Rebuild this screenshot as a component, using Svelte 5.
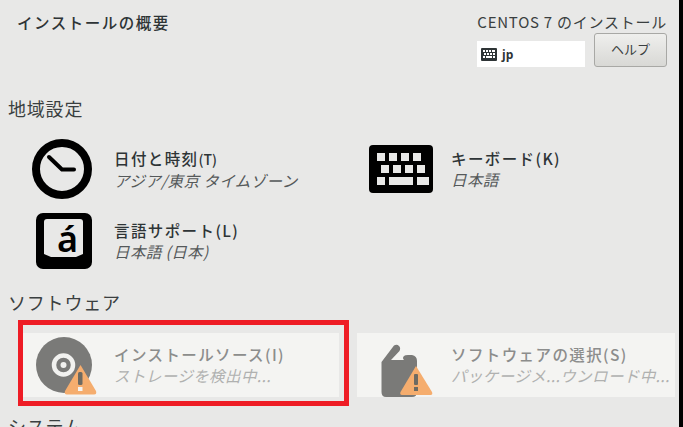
<script>
  const warn = "M80.5 365 L96 391 Q97 394.5 94 394.5 L67 394.5 Q64 394.5 65 391 Z";
</script>

<div class="screen">
  <main class="page">
    <header class="top">
      <h1>インストールの概要</h1>
      <div class="top-right">
        <div class="product">CENTOS 7 のインストール</div>
        <div class="controls">
          <div class="layout">
            <svg width="16" height="13" viewBox="0 0 16 13">
              <rect x="0" y="0" width="16" height="13" rx="1" fill="#2e3436" />
              <g fill="#fff">
                <rect x="2" y="2" width="2" height="2" /><rect x="5" y="2" width="2" height="2" /><rect x="8" y="2" width="2" height="2" /><rect x="11" y="2" width="3" height="2" />
                <rect x="3" y="5" width="2" height="2" /><rect x="6" y="5" width="2" height="2" /><rect x="9" y="5" width="2" height="2" /><rect x="12" y="5" width="2" height="2" />
                <rect x="2" y="8" width="2" height="2" /><rect x="5" y="8" width="6" height="2" /><rect x="12" y="8" width="2" height="2" />
              </g>
            </svg>
            <span>jp</span>
          </div>
          <button class="help">ヘルプ</button>
        </div>
      </div>
    </header>

    <h2>地域設定</h2>
    <section class="grid">
      <div class="spoke">
        <svg width="64" height="64" viewBox="30 137 64 64">
          <circle cx="62" cy="169" r="26" fill="none" stroke="#000" stroke-width="8" />
          <path d="M49 157 L62 169.5 H74" fill="none" stroke="#000" stroke-width="4" stroke-linecap="round" stroke-linejoin="round" />
        </svg>
        <div class="label">
          <div class="name">日付と時刻<small>(T)</small></div>
          <div class="status">アジア/東京 タイムゾーン</div>
        </div>
      </div>
      <div class="spoke">
        <svg width="64" height="64" viewBox="369 139 64 64">
          <rect x="369" y="147" width="64" height="48" rx="4" fill="#000" />
          <g fill="#e8e8e7">
            <rect x="377" y="155" width="8" height="8" /><rect x="389" y="155" width="8" height="8" /><rect x="401" y="155" width="8" height="8" /><rect x="413" y="155" width="8" height="8" />
            <rect x="381" y="167" width="8" height="8" /><rect x="393" y="167" width="8" height="8" /><rect x="405" y="167" width="8" height="8" /><rect x="417" y="167" width="8" height="8" />
            <rect x="377" y="179" width="8" height="8" /><rect x="389" y="179" width="24" height="8" /><rect x="417" y="179" width="12" height="8" />
          </g>
        </svg>
        <div class="label">
          <div class="name">キーボード(K)</div>
          <div class="status">日本語</div>
        </div>
      </div>
      <div class="spoke">
        <svg width="64" height="64" viewBox="30 209 64 64">
          <rect x="36" y="213" width="56" height="56" rx="7" fill="#000" />
          <path d="M44 222 Q44 219 47 219 H80 Q83 219 83 222 V254 L76 257 H51 L44 254 Z" fill="#e8e8e7" />
          <text x="67.5" y="252" text-anchor="middle" class="glyph">á</text>
        </svg>
        <div class="label">
          <div class="name">言語サポート(L)</div>
          <div class="status">日本語 (日本)</div>
        </div>
      </div>
    </section>

    <h2>ソフトウェア</h2>
    <section class="grid">
      <div class="spoke off">
        <svg width="64" height="64" viewBox="30 333 64 64">
          <circle cx="64" cy="365" r="28" fill="#7a7a78" />
          <circle cx="63.5" cy="365" r="9.5" fill="none" stroke="#f1f1ef" stroke-width="4.5" />
          <circle cx="63.5" cy="365" r="3" fill="#f1f1ef" />
          <path d={warn} fill="#f5ad6e" />
          <rect x="78" y="372" width="4.5" height="13" rx="1.5" fill="#6d6a62" />
          <rect x="78" y="387" width="4.5" height="4" fill="#f4f4f2" />
        </svg>
        <div class="label">
          <div class="name">インストールソース(I)</div>
          <div class="status">ストレージを検出中...</div>
        </div>
      </div>
      <div class="spoke off">
        <svg width="64" height="64" viewBox="369 333 64 64">
          <path d="M381.5 362 L394 345.5 Q397 344 399 346 Q401 348 399.5 351 L391 360 H404 Q402 358 404 356 Q405 355 408 355 H412 Q417 356 417 361 V392 Q417 397 412 397 H386 Q381.5 397 381.5 392 Z" fill="#7a7a78" />
          <path d="M416 366 L432 392 Q433 395 430.5 395 L402 395 Q399.5 395 400.5 392 Z" fill="#f5ad6e" />
          <rect x="414" y="374" width="4" height="11" rx="1" fill="#6d6a62" />
          <rect x="414" y="387" width="4" height="4" fill="#6d6a62" />
        </svg>
        <div class="label">
          <div class="name">ソフトウェアの選択(S)</div>
          <div class="status">パッケージメ...ウンロード中...</div>
        </div>
      </div>
      <div class="highlight"></div>
    </section>

    <h2>システム</h2>
  </main>
</div>

<style>
  :global(body) {
    margin: 0;
    background: #000;
  }

  .screen {
    width: 683px;
    height: 427px;
    overflow: hidden;
    background: #000;
    font-family: "Noto Sans CJK JP", "Noto Sans", sans-serif;
    color: #2e3436;
  }

  .page {
    width: 679px;
    height: 427px;
    overflow: hidden;
    background: #e8e8e7;
  }

  .top {
    display: flex;
    justify-content: space-between;
    height: 97px;
    padding: 12px 12px 0 17px;
    box-sizing: border-box;
  }

  h1 {
    margin: 0;
    font-size: 15.5px;
    line-height: 20px;
    font-weight: 500;
    letter-spacing: 1.5px;
  }

  .top-right {
    display: flex;
    flex-direction: column;
    align-items: flex-end;
  }

  .product {
    font-size: 15px;
    line-height: 20px;
    letter-spacing: 0.75px;
    color: #3a3f40;
    white-space: nowrap;
  }

  .controls {
    display: flex;
    align-items: flex-end;
    gap: 9px;
    margin-top: 1px;
  }

  .layout {
    display: flex;
    align-items: center;
    gap: 5px;
    width: 108px;
    height: 26px;
    padding-left: 4px;
    box-sizing: border-box;
    background: #fff;
    font-family: "Open Sans", sans-serif;
    font-size: 12px;
    font-weight: 700;
  }

  .help {
    width: 73px;
    height: 34px;
    padding: 0 0 4px;
    border: 1px solid #a8a8a5;
    border-radius: 3px;
    background: linear-gradient(#efefed, #d8d8d5);
    color: #3a3f40;
    font-family: inherit;
    font-size: 13px;
  }

  h2 {
    margin: 0 0 20px 8px;
    font-size: 18px;
    line-height: 22px;
    font-weight: 400;
    letter-spacing: 0.8px;
    color: #3a3f40;
  }

  section + h2 {
    margin-top: 18px;
  }

  h2:first-of-type {
    margin-bottom: 18px;
  }

  .grid {
    position: relative;
    display: grid;
    grid-template-columns: 316px 318px;
    column-gap: 18px;
    row-gap: 8px;
    margin-left: 23px;
    width: 652px;
  }

  .spoke {
    display: flex;
    align-items: center;
    height: 64px;
    padding-left: 7px;
    gap: 20px;
  }

  .spoke:nth-child(even) {
    padding-left: 12px;
    gap: 18px;
  }

  .spoke svg {
    flex: none;
    overflow: visible;
  }

  .glyph {
    font-family: "Noto Sans", sans-serif;
    font-size: 36px;
    font-weight: 600;
    fill: #000;
  }

  .name {
    font-size: 15.5px;
    line-height: 21px;
    font-weight: 500;
    letter-spacing: 1.4px;
    white-space: nowrap;
  }

  .name small {
    font-size: 14px;
    letter-spacing: 0;
  }

  .status {
    font-size: 15.5px;
    line-height: 21px;
    letter-spacing: 0.4px;
    font-style: italic;
    color: #55595a;
    white-space: nowrap;
  }

  .off {
    background: #f4f4f2;
  }

  .off .name {
    color: #8c8d8c;
  }

  .off .status {
    color: #b0b1b0;
  }

  .highlight {
    position: absolute;
    left: -5px;
    top: -13px;
    width: 321px;
    height: 76px;
    border: 5px solid #ee1c25;
    pointer-events: none;
  }
</style>
